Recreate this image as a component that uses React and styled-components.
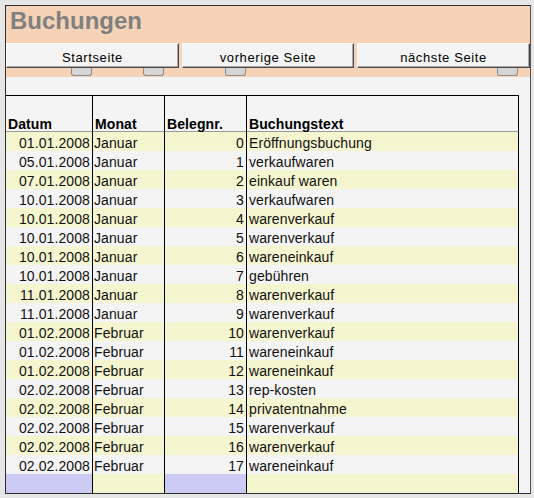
import React from "react";
import styled, {createGlobalStyle} from "styled-components";

const rows = [
    ["01.01.2008", "Januar", 0, "Eröffnungsbuchung"],
    ["05.01.2008", "Januar", 1, "verkaufwaren"],
    ["07.01.2008", "Januar", 2, "einkauf waren"],
    ["10.01.2008", "Januar", 3, "verkaufwaren"],
    ["10.01.2008", "Januar", 4, "warenverkauf"],
    ["10.01.2008", "Januar", 5, "warenverkauf"],
    ["10.01.2008", "Januar", 6, "wareneinkauf"],
    ["10.01.2008", "Januar", 7, "gebühren"],
    ["11.01.2008", "Januar", 8, "warenverkauf"],
    ["11.01.2008", "Januar", 9, "warenverkauf"],
    ["01.02.2008", "Februar", 10, "warenverkauf"],
    ["01.02.2008", "Februar", 11, "wareneinkauf"],
    ["01.02.2008", "Februar", 12, "wareneinkauf"],
    ["02.02.2008", "Februar", 13, "rep-kosten"],
    ["02.02.2008", "Februar", 14, "privatentnahme"],
    ["02.02.2008", "Februar", 15, "warenverkauf"],
    ["02.02.2008", "Februar", 16, "warenverkauf"],
    ["02.02.2008", "Februar", 17, "wareneinkauf"],
];

const YELLOW = "#f5f5d0";
const PLAIN = "#f4f4f4";
const LAVENDER = "#cbcbf3";

// left offsets of the little grey tabs under the buttons
const tabs = [65, 51, 61, 251];

function App() {
    return (
        <>
            <GlobalStyle/>
            <Frame>
                <Head>
                    <Title>Buchungen</Title>
                    <Buttons>
                        <Button>Startseite</Button>
                        <Button>vorherige Seite</Button>
                        <Button>nächste Seite</Button>
                    </Buttons>
                    <TabRow>
                        {tabs.map((m, i) => <Tab key={i} $offset={m}/>)}
                    </TabRow>
                </Head>
                <Spacer/>
                <Table>
                    <Cell $head>Datum</Cell>
                    <Cell $head>Monat</Cell>
                    <Cell $head>Belegnr.</Cell>
                    <Cell $head>Buchungstext</Cell>
                    {rows.map((r, i) => {
                        const bg = i % 2 === 0 ? YELLOW : PLAIN;
                        return (
                            <React.Fragment key={i}>
                                <Cell $bg={bg} $right>{r[0]}</Cell>
                                <Cell $bg={bg}>{r[1]}</Cell>
                                <Cell $bg={bg} $right>{r[2]}</Cell>
                                <Cell $bg={bg} $text>{r[3]}</Cell>
                            </React.Fragment>
                        );
                    })}
                    <Cell $bg={LAVENDER}/>
                    <Cell $bg={YELLOW}/>
                    <Cell $bg={LAVENDER}/>
                    <Cell $bg={YELLOW}/>
                </Table>
            </Frame>
        </>
    );
}

const GlobalStyle = createGlobalStyle`
  body{
    margin: 0;
    background: #e6e6e6;
    font-family: "Liberation Sans", Arial, sans-serif;
  }
`;

const Frame = styled.div`
  margin: 5px;
  width: 526px;
  height: 489px;
  box-sizing: border-box;
  border: 1px solid #2e2e2e;
  border-right-color: #555;
  background: ${PLAIN};
  display: flex;
  flex-direction: column;
  overflow: hidden;
`;

const Head = styled.div`
  background: #f6d3b6;
  display: flex;
  flex-direction: column;
`;

const Title = styled.h1`
  margin: 0;
  height: 37px;
  box-sizing: border-box;
  padding: 1px 0 0 4px;
  font-size: 24px;
  line-height: 28px;
  font-weight: bold;
  color: #808080;
`;

const Buttons = styled.div`
  display: grid;
  grid-template-columns: 173px 172px 173px;
  column-gap: 3px;
  height: 25px;
`;

const Button = styled.div`
  box-sizing: border-box;
  background: #f4f4f4;
  border: 1px solid;
  border-color: #ffffff #4a4a4a #4a4a4a #ffffff;
  box-shadow: inset -1px -1px 0 #a8a8a8;
  display: flex;
  align-items: center;
  justify-content: center;
  padding-top: 4px;
  font-size: 13px;
  letter-spacing: 0.6px;
  color: #000;
`;

const TabRow = styled.div`
  display: flex;
  height: 9px;
`;

const Tab = styled.div`
  margin-left: ${p => p.$offset}px;
  width: 21px;
  height: 8px;
  box-sizing: border-box;
  background: #d6d6d6;
  border: 1px solid #8c8c8c;
  border-top: none;
  border-radius: 0 0 3px 3px;
`;

const Spacer = styled.div`
  height: 20px;
`;

const Table = styled.div`
  flex: 1;
  width: 513px;
  display: grid;
  grid-template-columns: 87px 72px 82px 272px;
  grid-template-rows: 37px repeat(19, 1fr);
  font-size: 14px;
  color: #111;
`;

const Cell = styled.div`
  box-sizing: border-box;
  border-right: 1px solid #000;
  background: ${p => p.$bg || "transparent"};
  display: flex;
  align-items: ${p => p.$head ? "flex-end" : "center"};
  justify-content: ${p => p.$right ? "flex-end" : "flex-start"};
  padding: ${p => p.$head ? "0 0 0 2px" : p.$text ? "3px 0 0 2px" : "3px 2px 0 1px"};
  white-space: nowrap;
  line-height: 16px;
  letter-spacing: 0.1px;
  ${p => p.$head && `
    border-top: 1px solid #000;
    border-bottom: 1px solid #9a9a9a;
    font-weight: bold;
    color: #000;
    line-height: 14px;
  `}
`;

export default App;
